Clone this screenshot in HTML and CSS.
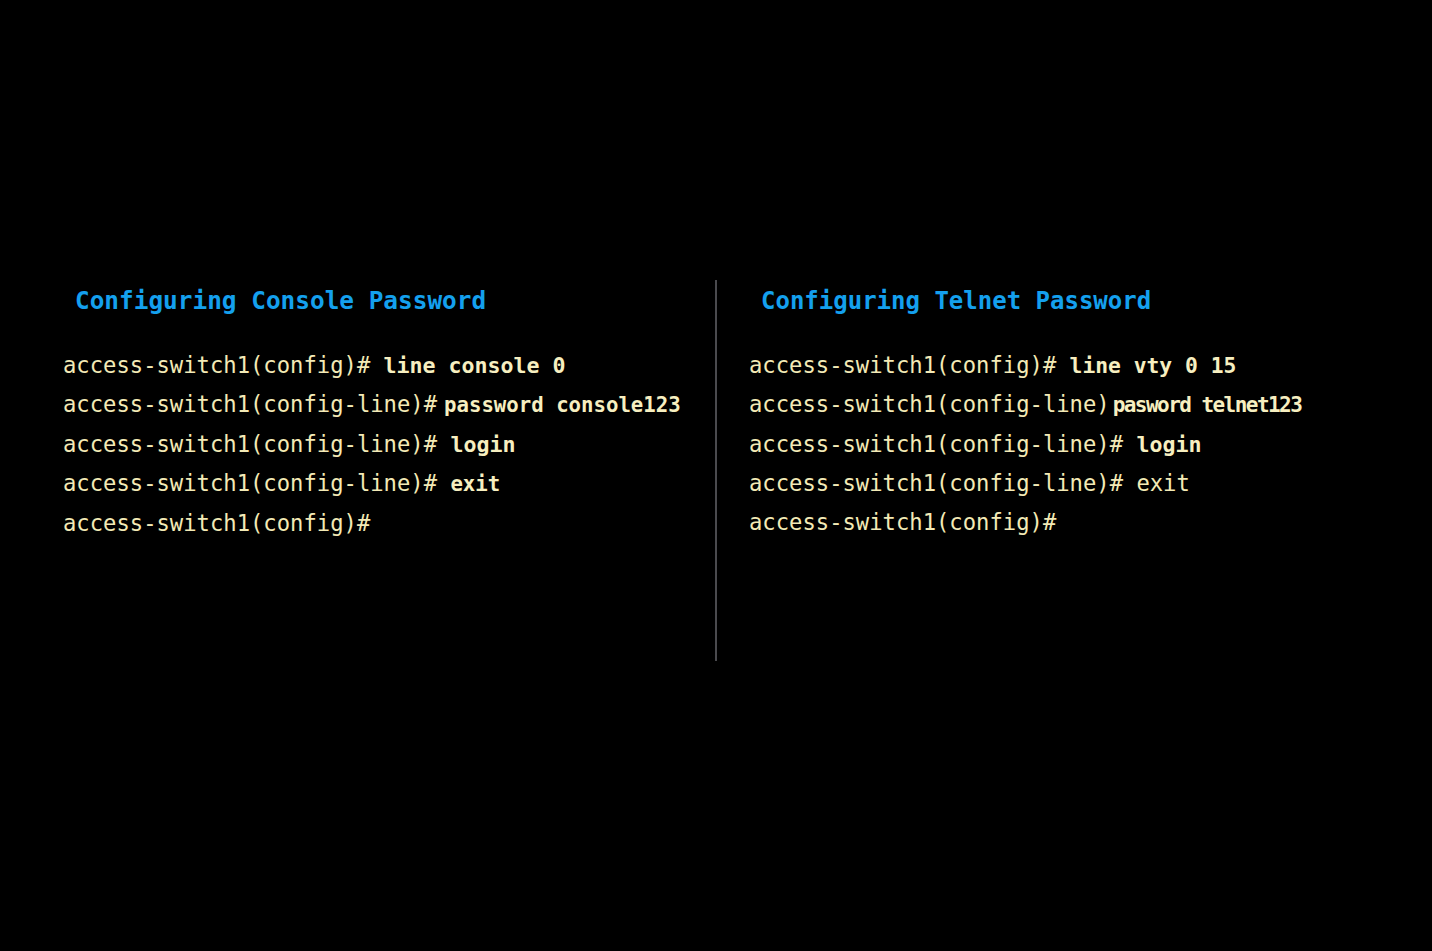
FILE: index.html
```html
<!DOCTYPE html>
<html lang="en">
<head>
<meta charset="utf-8">
<title>Configuring Passwords</title>
<link rel="stylesheet" href="styles.css">
</head>
<body>
<main class="stage">
  <section class="panel panel-left">
    <h2 class="title">Configuring Console Password</h2>
    <div class="code">
      <div class="line">access-switch1(config)# <b class="cmd">line console 0</b></div>
      <div class="line">access-switch1(config-line)#<b class="cmd cmd-narrow">password console123</b></div>
      <div class="line">access-switch1(config-line)# <b class="cmd">login</b></div>
      <div class="line">access-switch1(config-line)# <b class="cmd cmd-small">exit</b></div>
      <div class="line">access-switch1(config)#</div>
    </div>
  </section>
  <div class="divider"></div>
  <section class="panel panel-right">
    <h2 class="title title-right">Configuring Telnet Password</h2>
    <div class="code">
      <div class="line">access-switch1(config)# <b class="cmd cmd-mid">line vty 0 15</b></div>
      <div class="line">access-switch1(config-line)<b class="cmd cmd-cond">pasword telnet123</b></div>
      <div class="line">access-switch1(config-line)# <b class="cmd">login</b></div>
      <div class="line">access-switch1(config-line)# exit</div>
      <div class="line">access-switch1(config)#</div>
    </div>
  </section>
</main>
</body>
</html>
```

FILE: styles.css
```css
html, body {
  margin: 0;
  padding: 0;
  background: #000;
}

body {
  width: 1432px;
  height: 951px;
  overflow: hidden;
  font-family: "DejaVu Sans Mono", "Liberation Mono", monospace;
}

.stage {
  display: flex;
  align-items: flex-start;
  padding: 280px 0 0 63px;
}

.panel {
  display: flex;
  flex-direction: column;
}

.panel-left {
  width: 652px;
}

.panel-right {
  padding-left: 32px;
}

.divider {
  width: 2px;
  height: 381px;
  background: #4a4a4e;
}

.title {
  margin: 1px 0 25px 12px;
  font-size: 24.4px;
  line-height: 40px;
  font-weight: bold;
  color: #14a0ee;
}

.title-right {
  font-size: 24px;
}

.code {
  display: flex;
  flex-direction: column;
}

.line {
  font-size: 22.2px;
  line-height: 39px;
  color: #f3eab6;
  white-space: pre;
}

.cmd {
  font-weight: bold;
  color: #f7efc0;
  font-size: 21.6px;
}

.cmd-narrow {
  font-size: 20.7px;
  margin-left: 7px;
}

.cmd-small {
  font-size: 20.7px;
}

.cmd-mid {
  font-size: 21.3px;
}

.cmd-cond {
  font-size: 21px;
  letter-spacing: -1.55px;
  margin-left: 3px;
}
```
